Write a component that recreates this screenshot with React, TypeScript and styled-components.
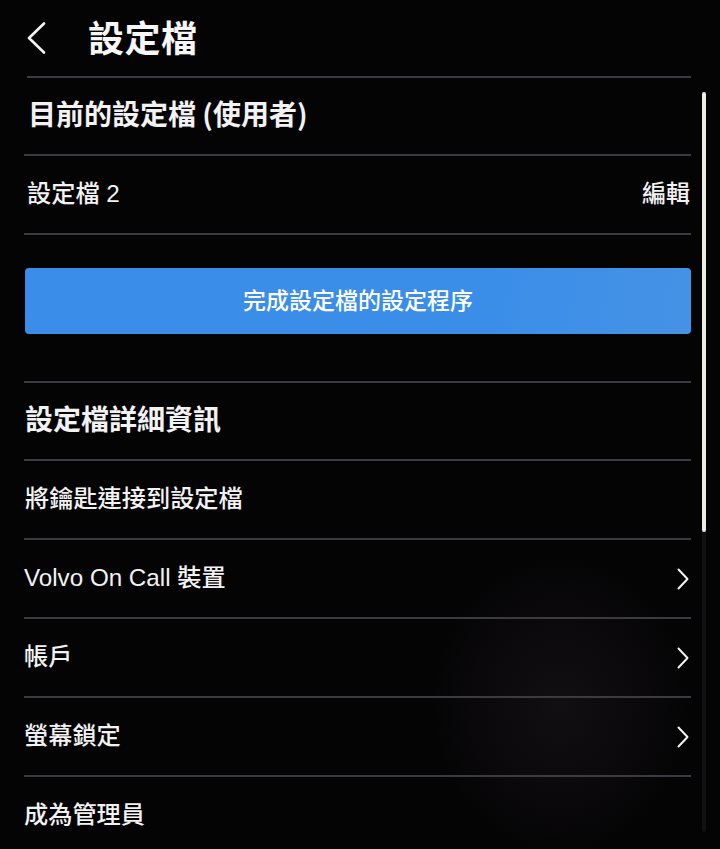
import React from "react";
import styled, { createGlobalStyle } from "styled-components";

const GlobalStyle = createGlobalStyle`
  html, body { margin: 0; padding: 0; background: #030303; }
  body {
    font-family: "Liberation Sans", "Noto Sans CJK TC", sans-serif;
    color: #f2f2f2;
  }
  * { box-sizing: border-box; }
`;

const Page = styled.div`
  width: 720px;
  height: 849px;
  overflow: hidden;
  display: flex;
  align-items: flex-start;
  background: radial-gradient(ellipse 130px 150px at 560px 705px, #120f13 0%, #050405 100%);
`;

const Column = styled.div`
  width: 691px;
  flex-shrink: 0;
  display: flex;
  flex-direction: column;
`;

const Header = styled.div`
  height: 78px;
  flex-shrink: 0;
  margin-left: 27px;
  display: flex;
  align-items: center;
  border-bottom: 2px solid #3b3b42;
  padding-bottom: 4px;
`;

const BackButton = styled.div`
  width: 61px;
  display: flex;
  align-items: center;
  padding-top: 3px;
`;

const Title = styled.h1`
  margin: 0;
  font-family: "Noto Sans CJK TC", sans-serif;
  font-size: 36px;
  font-weight: 700;
  letter-spacing: 0.5px;
  color: #f6f6f6;
  line-height: 1;
`;

const List = styled.div`
  margin-left: 24px;
  display: flex;
  flex-direction: column;
`;

const Row = styled.div<{ $bold?: boolean; $tight?: boolean }>`
  height: ${(p) => (p.$tight ? 78 : 79)}px;
  flex-shrink: 0;
  display: flex;
  align-items: center;
  justify-content: space-between;
  border-bottom: 2px solid #3b3b42;
  font-family: ${(p) =>
    p.$bold
      ? `"Noto Sans CJK TC", sans-serif`
      : `"Liberation Sans", "Noto Sans CJK TC", sans-serif`};
  font-size: ${(p) => (p.$bold ? "28px" : "24.2px")};
  font-weight: ${(p) => (p.$bold ? 700 : 500)};
  color: #f2f2f2;
`;

const Label = styled.span<{ $indent?: number }>`
  display: block;
  padding-left: ${(p) => p.$indent ?? 0}px;
  padding-bottom: 7px;
`;

const Action = styled.span`
  display: block;
  font-family: "Noto Sans CJK TC", sans-serif;
  font-size: 24px;
  font-weight: 500;
  padding-right: 1px;
  padding-bottom: 7px;
`;

const ButtonBlock = styled.div`
  height: 148px;
  flex-shrink: 0;
  padding-top: 33px;
  border-bottom: 2px solid #3b3b42;
`;

const PrimaryButton = styled.button`
  width: 666px;
  margin-left: 1px;
  height: 66px;
  border: none;
  border-radius: 4px;
  background: linear-gradient(100deg, #3a8de8 0%, #3b8ee8 70%, #4592e6 100%);
  color: #ffffff;
  font-family: "Noto Sans CJK TC", sans-serif;
  font-size: 23px;
  font-weight: 500;
  display: flex;
  align-items: center;
  justify-content: center;
  padding: 0 0 4px 0;
`;

const ChevronBox = styled.span`
  display: flex;
  align-items: center;
  padding-right: 2px;
`;

const ScrollTrack = styled.div`
  margin-top: 92px;
  margin-left: 11px;
  width: 4px;
  height: 740px;
  flex-shrink: 0;
  border-radius: 2px;
  background: #111115;
  display: flex;
  flex-direction: column;
`;

const ScrollThumb = styled.div`
  width: 4px;
  height: 440px;
  border-radius: 2px;
  background: #ecebe6;
`;

const Chevron = () => (
  <ChevronBox>
    <svg width="12" height="22" viewBox="0 0 12 22">
      <polyline
        points="1.5,1.5 10.5,11 1.5,20.5"
        fill="none"
        stroke="#f2f2f2"
        strokeWidth="2"
        strokeLinecap="round"
        strokeLinejoin="round"
      />
    </svg>
  </ChevronBox>
);

const BackChevron = () => (
  <svg width="19" height="32" viewBox="0 0 19 32">
    <polyline
      points="17,1.5 2,16 17,30.5"
      fill="none"
      stroke="#f4f4f4"
      strokeWidth="2.6"
      strokeLinecap="round"
      strokeLinejoin="round"
    />
  </svg>
);

export default function App() {
  return (
    <>
      <GlobalStyle />
      <Page>
        <Column>
          <Header>
            <BackButton>
              <BackChevron />
            </BackButton>
            <Title>設定檔</Title>
          </Header>
          <List>
            <Row $bold $tight>
              <Label $indent={4}>目前的設定檔 (使用者)</Label>
            </Row>
            <Row>
              <Label $indent={3}>設定檔 2</Label>
              <Action>編輯</Action>
            </Row>
            <ButtonBlock>
              <PrimaryButton>完成設定檔的設定程序</PrimaryButton>
            </ButtonBlock>
            <Row $bold $tight>
              <Label $indent={1}>設定檔詳細資訊</Label>
            </Row>
            <Row>
              <Label $indent={1}>將鑰匙連接到設定檔</Label>
            </Row>
            <Row>
              <Label>Volvo On Call 裝置</Label>
              <Chevron />
            </Row>
            <Row>
              <Label>帳戶</Label>
              <Chevron />
            </Row>
            <Row $tight={false}>
              <Label>螢幕鎖定</Label>
              <Chevron />
            </Row>
            <Row>
              <Label>成為管理員</Label>
            </Row>
          </List>
        </Column>
        <ScrollTrack>
          <ScrollThumb />
        </ScrollTrack>
      </Page>
    </>
  );
}
